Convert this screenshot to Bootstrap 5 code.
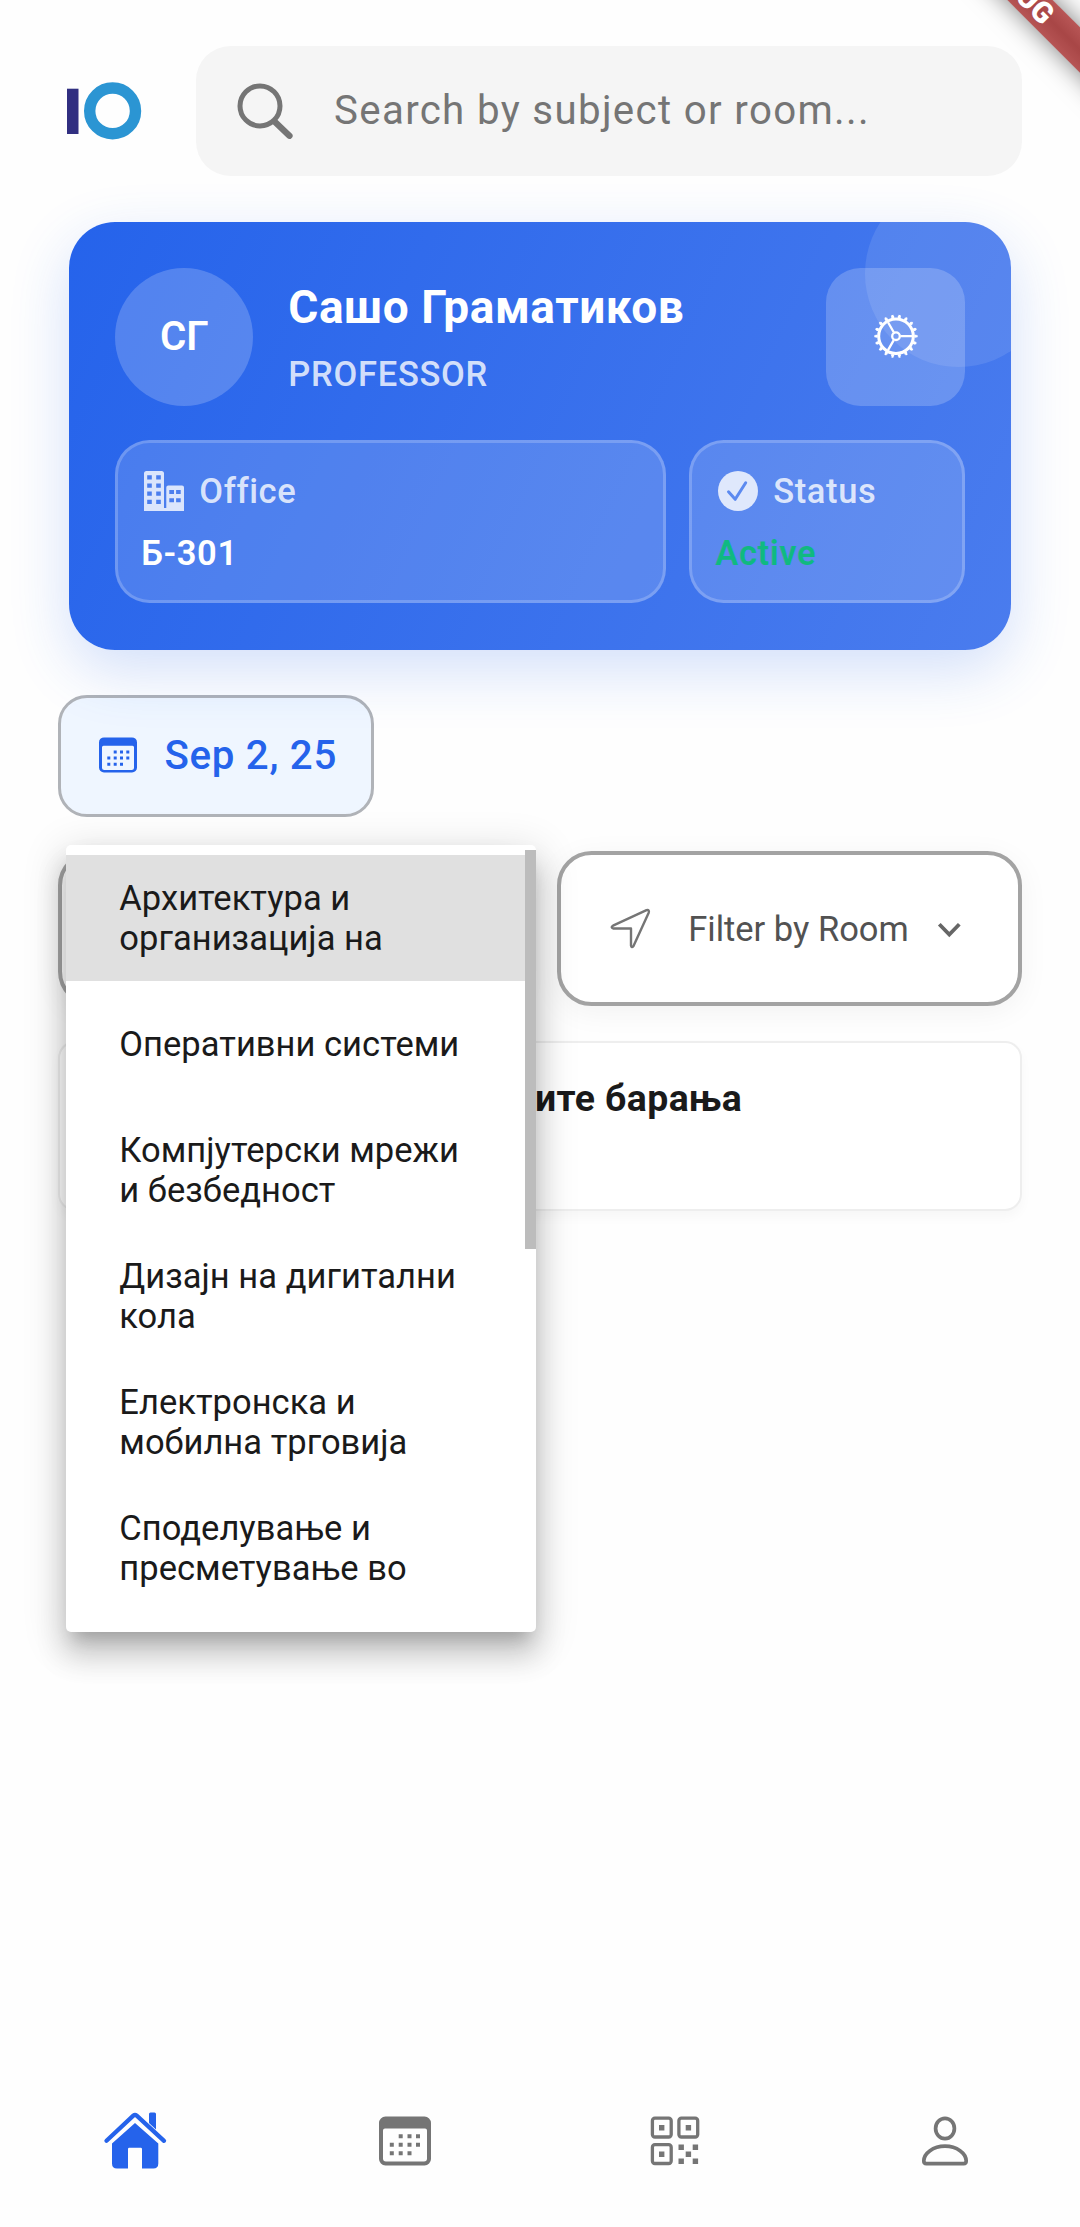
<!DOCTYPE html>
<html lang="mk">
<head>
<meta charset="utf-8">
<meta name="viewport" content="width=device-width, initial-scale=1">
<title>Schedule</title>
<link href="https://cdn.jsdelivr.net/npm/bootstrap@5.3.0/dist/css/bootstrap.min.css" rel="stylesheet">
<style>
body{background:#fefefe;font-family:Roboto,"Noto Sans",sans-serif;color:#1a1a1a}
.screen{height:2227px;padding:46px 58px 0 57.5px;overflow:hidden}
svg{display:block;flex:none}
.debug-ribbon{left:866px;top:-30px;width:300px;height:32px;line-height:32px;transform:rotate(45deg);background:linear-gradient(#b85656,#a84646 50%,#b65454);color:#fff;font-weight:900;font-size:29.3px;text-align:center;box-shadow:0 0 26px rgba(0,0,0,.5);z-index:9}
.search-box{height:129.7px;border-radius:34.5px;background:#f5f5f5;padding-left:40px}
.search-text{font-size:40.25px;letter-spacing:1.33px;color:#757575;margin-left:38px}
.profile{margin:46px 11.2px 0 11.8px;height:428px;border-radius:46px;padding:46px;background:linear-gradient(114.4deg,#2563eb,#4a7cee);box-shadow:0 20px 60px rgba(37,99,235,.2);color:#fff}
.clip{inset:0;border-radius:46px;overflow:hidden}
.bubble{width:187px;height:187px;right:-41.5px;top:-42px;background:rgba(255,255,255,.1)}
.avatar{width:138px;height:138px;background:rgba(255,255,255,.2);font-weight:600;font-size:40.25px}
.who{margin-left:35px}
.who-name{font-size:46px;font-weight:700;line-height:60px;letter-spacing:.55px}
.who-role{font-size:34.5px;font-weight:500;line-height:43px;margin-top:16.5px;letter-spacing:.72px;color:rgba(255,255,255,.8)}
.gear{width:138.5px;height:138px;border-radius:34.5px;background:rgba(255,255,255,.2)}
.stats{margin-top:34.7px;gap:23px}
.stat{height:163px;border:3px solid rgba(255,255,255,.2);border-radius:34.5px;padding:23px;background:rgba(255,255,255,.15);background-clip:border-box}
.stat-wide{width:551px}
.stat-label{height:50px;font-size:34.5px;font-weight:500;gap:12px;letter-spacing:.6px;color:rgba(255,255,255,.8)}
.stat-value{margin-top:13px;line-height:48px;font-size:34.5px;font-weight:600;letter-spacing:.6px}
.green{color:#10b981}
.date-chip{margin-top:45.5px;width:316px;height:121.5px;border:3px solid #b0b3b8;border-radius:29px;background:#eff6ff;color:#2563eb;font-size:40.25px;font-weight:500;letter-spacing:.7px;padding-left:34px}
.date-chip span{margin-left:24px}
.filters{margin-top:34.7px;gap:35px}
.filter{width:464.7px;height:155px;border:4px solid #a3a3a3;border-radius:34.5px;background:#fff;box-shadow:0 6px 30px rgba(0,0,0,.05)}
.filter-label{font-size:34.5px;color:#525252;margin-left:37px;margin-right:-1px;padding-top:2px}
.menu{left:8.3px;top:-6.5px;width:470px;height:787.5px;border-radius:5px;background:#fff;padding-top:10.5px;z-index:5;box-shadow:0 14px 16px -8px rgba(0,0,0,.2),0 23px 29px 3px rgba(0,0,0,.14),0 9px 40px 6px rgba(0,0,0,.12)}
.menu-item{height:126px;width:459px;padding-left:53.5px;font-size:34.5px;line-height:40.3px;letter-spacing:.03px}
.menu-item.on{background:#e0e0e0}
.thumb{right:0;top:5.5px;width:11px;height:399px;background:#bcbcbc}
.result{margin-top:35px;height:170px;border:2px solid #eee;border-radius:17px;background:#fff;box-shadow:0 6px 12px rgba(0,0,0,.03);padding:32px 0 0 475.500px}
.result-title{font-size:37.4px;font-weight:700;line-height:47px;letter-spacing:.4px}
.tabs{margin:0 -58px 0 -57.5px;height:175px}
</style>
<script src="https://cdn.jsdelivr.net/npm/bootstrap@5.3.0/dist/js/bootstrap.bundle.min.js"></script>
</head>
<body>
<div class="screen position-relative d-flex flex-column">
  <div class="debug-ribbon position-absolute">DEBUG</div>

  <header class="d-flex align-items-center">
    <svg width="138.5" height="60" viewBox="58 80.8 138.5 60"><path fill="#312f81" d="M67 88.5h11.5v45.3H67z"/><circle cx="112.6" cy="110.7" r="22.9" fill="none" stroke="#2b95d3" stroke-width="11.4"/></svg>
    <div class="search-box flex-fill d-flex align-items-center">
      <svg width="60" height="60" viewBox="236 80.8 60 60" fill="none" stroke="#757575"><circle cx="260" cy="105.7" r="20" stroke-width="5"/><path d="M274.8 121.5l14.6 14" stroke-width="6.4" stroke-linecap="round"/></svg>
      <div class="search-text">Search by subject or room...</div>
    </div>
  </header>

  <section class="profile position-relative">
    <div class="clip position-absolute"><div class="bubble position-absolute rounded-circle"></div></div>
    <div class="position-relative d-flex align-items-center">
      <div class="avatar rounded-circle d-flex align-items-center justify-content-center">СГ</div>
      <div class="who flex-fill">
        <div class="who-name">Сашо Граматиков</div>
        <div class="who-role">PROFESSOR</div>
      </div>
      <div class="gear d-flex align-items-center justify-content-center">
        <svg width="46" height="46" viewBox="-23 -22.2 46 46" fill="none" stroke="#fff"><circle r="17.3" stroke-width="3"/><circle r="19.4" stroke-width="2.2" pathLength="180" stroke-dasharray="4.4 5.6" stroke-dashoffset="2.2"/><circle r="20.8" stroke-width="1.8" pathLength="180" stroke-dasharray="2.8 7.2" stroke-dashoffset="1.4"/><circle r="3.8" stroke-width="2.3"/><path stroke-width="2.3" d="M4.5 0H16M-2.25-3.9L-8-13.9M-2.25 3.9L-8 13.9"/></svg>
      </div>
    </div>
    <div class="stats position-relative d-flex">
      <div class="stat stat-wide">
        <div class="stat-label d-flex align-items-center">
          <svg width="46" height="46" viewBox="141 468 46 46" fill="#fff" fill-opacity=".8" fill-rule="evenodd"><path d="M144 511V473.500a2.500 2.500 0 0 1 2.500-2.500h15a2.500 2.500 0 0 1 2.500 2.500V508h2.300V487.500a2 2 0 0 1 2-2h13.700a2 2 0 0 1 2 2V511zM147.200 475.200v4.300h4.600v-4.300zm9 0v4.300h4.600v-4.300zM147.200 483.500v4.300h4.600v-4.300zm9 0v4.300h4.600v-4.300zM147.200 491.500v4.300h4.600v-4.300zm9 0v4.300h4.600v-4.300zM147.200 499.700v4.300h4.600v-4.300zm9 0v4.300h4.600v-4.300zM169.300 490v4.100h4.700V490zm6.800 0v4.100h4.600V490zM169.300 498.200v4.100h4.700v-4.100zm6.800 0v4.100h4.600v-4.100z"/></svg>
          <span>Office</span>
        </div>
        <div class="stat-value">Б-301</div>
      </div>
      <div class="stat flex-fill">
        <div class="stat-label d-flex align-items-center">
          <svg width="46" height="46" viewBox="715 468 46 46"><circle cx="738" cy="491" r="20" fill="#dfe8fc"/><path d="M728.500 491.800l6.700 7.500 10.500-16.500" fill="none" stroke="#5c8af0" stroke-width="3" stroke-linecap="round" stroke-linejoin="round"/></svg>
          <span>Status</span>
        </div>
        <div class="stat-value green">Active</div>
      </div>
    </div>
  </section>

  <div class="date-chip d-flex align-items-center">
    <svg width="46" height="46" viewBox="95 732.600 46 46" fill="#2563eb"><path fill-rule="evenodd" d="M104 737h28a5 5 0 0 1 5 5v25a5 5 0 0 1-5 5h-28a5 5 0 0 1-5-5v-25a5 5 0 0 1 5-5zm-.500 8.300a1.500 1.500 0 0 0-1.500 1.500V767a2.500 2.500 0 0 0 2.500 2.500h27a2.500 2.500 0 0 0 2.500-2.500v-20.200a1.500 1.500 0 0 0-1.500-1.500z"/><path d="M113.700 750h3v3h-3zm6.300 0h3v3h-3zm6.300 0h3v3h-3zM107.300 756.200h3v3h-3zm6.400 0h3v3h-3zm6.300 0h3v3h-3zm6.300 0h3v3h-3zM107.300 762.300h3v3h-3zm6.400 0h3v3h-3zm6.300 0h3v3h-3z"/></svg>
    <span>Sep 2, 25</span>
  </div>

  <div class="filters d-flex position-relative">
    <div class="filter"></div>
    <div class="filter d-flex align-items-center ps-5">
      <svg width="42" height="42" viewBox="609 907 42 42" fill="none" stroke="#757575" stroke-width="2.400" stroke-linejoin="round"><path d="M646.500 909.200q3.200-.8 2.200 2.500L633.500 945q-2 2.500-2.500-.5V927.500H613.500q-3.300-1-.5-2.800z"/></svg>
      <span class="filter-label">Filter by Room</span>
      <svg class="ms-4" width="34" height="30" viewBox="932 914.500 34 30" fill="none" stroke="#666" stroke-width="3.800"><path d="M939.300 924.800l10 10.300 10-10.300"/></svg>
    </div>
    <div class="menu position-absolute">
      <div class="menu-item on d-flex align-items-center">Архитектура и<br>организација на</div>
      <div class="menu-item d-flex align-items-center">Оперативни системи</div>
      <div class="menu-item d-flex align-items-center">Компјутерски мрежи<br>и безбедност</div>
      <div class="menu-item d-flex align-items-center">Дизајн на дигитални<br>кола</div>
      <div class="menu-item d-flex align-items-center">Електронска и<br>мобилна трговија</div>
      <div class="menu-item d-flex align-items-center">Споделување и<br>пресметување во</div>
      <div class="thumb position-absolute"></div>
    </div>
  </div>

  <section class="result"><div class="result-title">ите барања</div></section>

  <nav class="tabs d-flex align-items-center mt-auto">
    <div class="col-3 d-flex justify-content-center"><svg width="66" height="66" viewBox="102 2106.500 66 66" fill="#2563eb"><path d="M149 2121.500v-8q0-1.500 1.500-1.500h4q1.500 0 1.500 1.500v15.500l-7-6.500z"/><path d="M106.500 2140.300L133.300 2115.200q1.700-1.500 3.400 0L164 2140.300" fill="none" stroke="#2563eb" stroke-width="4.300" stroke-linecap="round"/><path d="M135 2122.500l23.300 20.500v20q0 5-5 5H142v-19.500q0-1.300-1.300-1.300h-11.400q-1.300 0-1.300 1.300V2168h-11q-5 0-5-5v-20z"/></svg></div>
    <div class="col-3 d-flex justify-content-center"><svg width="66" height="66" viewBox="372 2106.500 66 66" fill="#757575"><path fill-rule="evenodd" d="M385.500 2116h39a6.500 6.500 0 0 1 6.500 6.500v36a6.500 6.500 0 0 1-6.500 6.500h-39a6.500 6.500 0 0 1-6.500-6.500v-36a6.500 6.500 0 0 1 6.500-6.500zm-.5 12a2 2 0 0 0-2 2v28a3 3 0 0 0 3 3h38a3 3 0 0 0 3-3v-28a2 2 0 0 0-2-2z"/><path d="M398.700 2133.800h4v4h-4zm8.800 0h4v4h-4zm8.500 0h4v4h-4zM389.800 2142.200h4v4h-4zm8.900 0h4v4h-4zm8.800 0h4v4h-4zm8.500 0h4v4h-4zM389.800 2150.800h4v4h-4zm8.900 0h4v4h-4zm8.800 0h4v4h-4z"/></svg></div>
    <div class="col-3 d-flex justify-content-center"><svg width="66" height="66" viewBox="642 2106.500 66 66" fill="#757575"><g fill="none" stroke="#757575" stroke-width="3.300"><rect x="652.400" y="2117.700" width="18.800" height="18.800" rx="2.500"/><rect x="678.900" y="2117.700" width="18.800" height="18.800" rx="2.500"/><rect x="652.400" y="2144.200" width="18.800" height="18.800" rx="2.500"/></g><path d="M659 2124.600h5.400v5.400H659zm26.700 0h5.400v5.400h-5.400zM659 2151h5.400v5.400H659zm26.700 0h5.400v5.400h-5.400zM678.500 2144h5.400v5.400h-5.400zm14.200 0h5.400v5.400h-5.400zM678.500 2158h5.400v5.400h-5.400zm14.200 0h5.400v5.400h-5.400z"/></svg></div>
    <div class="col-3 d-flex justify-content-center"><svg width="66" height="66" viewBox="912 2106.500 66 66" fill="none" stroke="#757575" stroke-width="3.700"><ellipse cx="945" cy="2128" rx="9.400" ry="10.100"/><path d="M945 2145.700c12 0 21 7 21.200 14.500q0 2.900-2.500 2.900h-37.400q-2.500 0-2.500-2.900c.2-7.500 9.200-14.500 21.200-14.500z"/></svg></div>
  </nav>
</div>
</body>
</html>
